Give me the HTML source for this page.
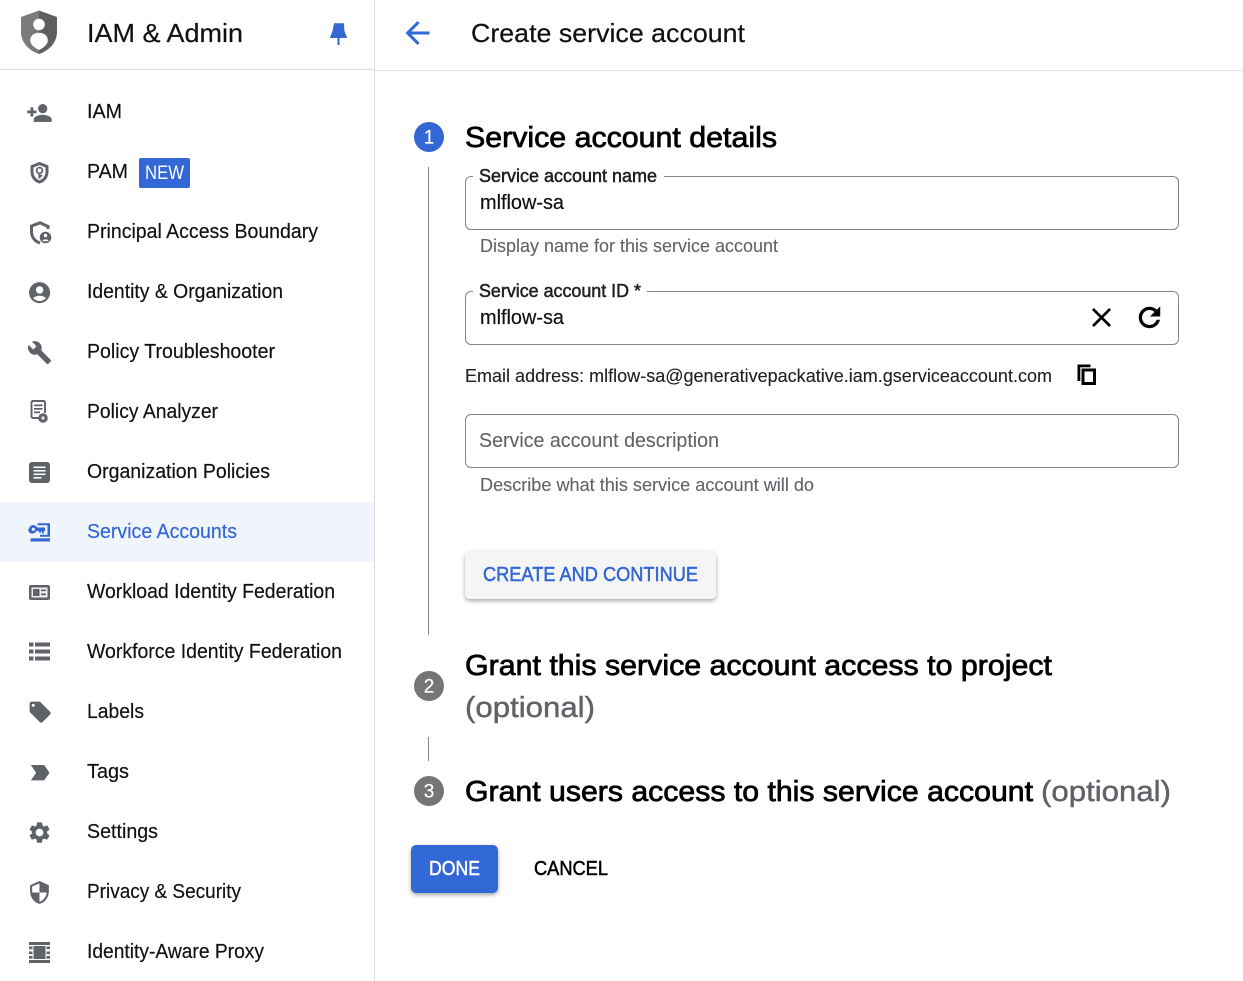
<!DOCTYPE html>
<html lang="en"><head><meta charset="utf-8"><title>Create service account</title>
<style>
html,body{margin:0;padding:0;background:#fff;width:1243px;height:981px;overflow:hidden}
svg{display:block}
text{font-family:"Liberation Sans",sans-serif}
.n{font-size:20px;fill:#111;stroke:#111;stroke-width:.18px}
.h{font-size:29px;fill:#000;stroke:#000;stroke-width:.75px}
.l{font-size:18px;fill:#202124;stroke:#202124;stroke-width:.5px}
.v{font-size:20px;fill:#111;stroke:#111;stroke-width:.18px}
.s{font-size:18px;fill:#5f6368;stroke:#5f6368;stroke-width:.1px}
.o{font-size:29px;fill:#5f6368;stroke:#5f6368;stroke-width:.45px}
.b{font-size:20px;stroke-width:.5px}
.i{fill:#5f6368}
</style></head><body>
<svg xmlns="http://www.w3.org/2000/svg" width="1243" height="981" viewBox="0 0 1243 981">
<defs>
<filter id="sh" x="-10%" y="-30%" width="120%" height="170%"><feDropShadow dx="0" dy="2" stdDeviation="2" flood-color="#000" flood-opacity=".35"/></filter>
</defs>
<rect width="1243" height="981" fill="#fff"/>
<rect x="0" y="502" width="374" height="60" fill="#eff4fd"/>
<rect x="374" y="0" width="1" height="981" fill="#dadce0"/>
<rect x="0" y="69" width="374" height="1" fill="#dadce0"/>
<rect x="375" y="70" width="868" height="1" fill="#e3e4e6"/>

<!-- logo -->
<path d="M39 10.500 21 17v15c0 10 7.500 18.500 18 22z" fill="#7b7b7b"/>
<path d="M39 10.500 57 17v15c0 10-7.500 18.500-18 22z" fill="#5f5f5f"/>
<circle cx="39" cy="24.500" r="5.800" fill="#fff"/>
<path d="M39 32.800c5.200 0 8.800 3.200 8.800 7.700 0 3.800-3.800 7-8.800 9.500-5-2.500-8.800-5.700-8.800-9.500 0-4.500 3.600-7.700 8.800-7.700z" fill="#fff"/>
<text x="87" y="42" font-size="26" fill="#111" stroke="#111" stroke-width=".2" textLength="156" lengthAdjust="spacingAndGlyphs">IAM &amp; Admin</text>
<path fill="#3367d6" d="M334 23.300h10l.3 6.500c.3 3 2.400 5.500 2.600 8.200h-7.400v7h-2v-7h-7.400c.2-2.700 2.300-5.200 2.600-8.200z"/>

<!-- nav text -->
<text class="n" x="87" y="118" textLength="35" lengthAdjust="spacingAndGlyphs">IAM</text>
<text class="n" x="87" y="178" textLength="41" lengthAdjust="spacingAndGlyphs">PAM</text>
<rect x="139" y="158" width="51" height="30" rx="2" fill="#3367d6"/>
<text x="145" y="179" font-size="19" fill="#fff" textLength="39" lengthAdjust="spacingAndGlyphs">NEW</text>
<text class="n" x="87" y="238" textLength="231" lengthAdjust="spacingAndGlyphs">Principal Access Boundary</text>
<text class="n" x="87" y="298" textLength="196" lengthAdjust="spacingAndGlyphs">Identity &amp; Organization</text>
<text class="n" x="87" y="358" textLength="188" lengthAdjust="spacingAndGlyphs">Policy Troubleshooter</text>
<text class="n" x="87" y="418" textLength="131" lengthAdjust="spacingAndGlyphs">Policy Analyzer</text>
<text class="n" x="87" y="478" textLength="183" lengthAdjust="spacingAndGlyphs">Organization Policies</text>
<text class="n" x="87" y="538" style="fill:#3367d6;stroke:#3367d6" textLength="150" lengthAdjust="spacingAndGlyphs">Service Accounts</text>
<text class="n" x="87" y="598" textLength="248" lengthAdjust="spacingAndGlyphs">Workload Identity Federation</text>
<text class="n" x="87" y="658" textLength="255" lengthAdjust="spacingAndGlyphs">Workforce Identity Federation</text>
<text class="n" x="87" y="718" textLength="57" lengthAdjust="spacingAndGlyphs">Labels</text>
<text class="n" x="87" y="778" textLength="42" lengthAdjust="spacingAndGlyphs">Tags</text>
<text class="n" x="87" y="838" textLength="71" lengthAdjust="spacingAndGlyphs">Settings</text>
<text class="n" x="87" y="898" textLength="154" lengthAdjust="spacingAndGlyphs">Privacy &amp; Security</text>
<text class="n" x="87" y="958" textLength="177" lengthAdjust="spacingAndGlyphs">Identity-Aware Proxy</text>

<!-- nav icons -->
<path class="i" stroke="#5f6368" stroke-width=".6" transform="translate(26.500,100) scale(1.080)" d="M15 12c2.210 0 4-1.790 4-4s-1.790-4-4-4-4 1.790-4 4 1.790 4 4 4zm-9-2V7H4v3H1v2h3v3h2v-3h3v-2H6zm9 4c-2.670 0-8 1.340-8 4v2h16v-2c0-2.660-5.330-4-8-4z"/>
<!-- PAM -->
<path fill="none" stroke="#5f6368" stroke-width="3" d="M39.500 163.500 32 166.500v5.500c0 4.600 3.100 8.600 7.500 10 4.400-1.400 7.500-5.400 7.500-10v-5.500z"/>
<circle cx="39.500" cy="170.500" r="2.900" fill="none" stroke="#5f6368" stroke-width="1.800"/>
<rect x="38.400" y="172.500" width="2.200" height="6" fill="#5f6368"/><rect x="39.500" y="175" width="2.800" height="1.700" fill="#5f6368"/>
<!-- PAB -->
<path fill="none" stroke="#5f6368" stroke-width="3" d="M48 229V226.500L40 222.800 31.500 226v6c0 5 3.500 9.500 8.500 11"/>
<circle cx="45.500" cy="237.500" r="5.800" fill="#5f6368"/>
<circle cx="45.500" cy="235.500" r="1.700" fill="#fff"/>
<path d="M42.300 240.500c.8-1.300 5.600-1.300 6.400 0-.8 1-5.600 1-6.400 0z" fill="#fff"/>
<!-- identity -->
<path class="i" transform="translate(27,280) scale(1.050)" d="M12 2C6.480 2 2 6.480 2 12s4.480 10 10 10 10-4.480 10-10S17.520 2 12 2zm0 4c1.930 0 3.500 1.570 3.500 3.500S13.930 13 12 13s-3.500-1.570-3.500-3.500S10.070 6 12 6zm0 14c-2.030 0-4.430-.82-6.140-2.880C7.550 15.800 9.680 15 12 15s4.450.8 6.140 2.120C16.430 19.180 14.030 20 12 20z"/>
<!-- wrench -->
<path class="i" transform="translate(27,340) scale(1.050)" d="M22.700 19l-9.100-9.100c.9-2.300.4-5-1.500-6.900-2-2-5-2.400-7.400-1.300L9 6 6 9 1.600 4.700C.4 7.100.9 10.100 2.900 12.100c1.900 1.900 4.600 2.400 6.900 1.500l9.100 9.100c.4.4 1 .4 1.400 0l2.300-2.300c.5-.4.500-1.100.1-1.400z"/>
<!-- analyzer -->
<path fill="none" stroke="#5f6368" stroke-width="1.900" d="M45 413v-10.500a1.500 1.500 0 0 0-1.500-1.500H33a1.500 1.500 0 0 0-1.500 1.500v14a1.500 1.500 0 0 0 1.500 1.500h6"/>
<rect x="34" y="404.500" width="8.500" height="1.700" fill="#5f6368"/><rect x="34" y="408" width="8.500" height="1.700" fill="#5f6368"/><rect x="34" y="411.500" width="6" height="1.700" fill="#5f6368"/>
<circle cx="43" cy="418" r="4.800" fill="#5f6368"/><circle cx="43" cy="418" r="1.600" fill="#e8e8e8"/>
<!-- org policies -->
<rect x="29" y="462" width="21" height="21" rx="3" fill="#5f6368"/>
<rect x="33.500" y="466.500" width="12" height="1.600" fill="#fff"/><rect x="33.500" y="470" width="12" height="1.600" fill="#fff"/><rect x="33.500" y="473.500" width="12" height="1.600" fill="#fff"/><rect x="33.500" y="477" width="8" height="1.600" fill="#fff"/>
<!-- service accounts -->
<g fill="#3367d6">
<path fill-rule="evenodd" d="M29 529.300a4.300 4.300 0 0 1 8.200-1.800H45v3.600h-1.200v2.400h-1.900v-2.400h-.9v1.700h-1.900v-1.700h-2.900a4.300 4.300 0 0 1-8.200-1.800zm4.300 1.600a1.600 1.600 0 1 0 0-3.200 1.600 1.600 0 0 0 0 3.200z"/>
<path d="M37.500 523.300H50v13.400H40v-2h7.500v-9.400h-10z"/>
<rect x="30.500" y="538.300" width="19.500" height="3.200"/>
</g>
<!-- workload -->
<path fill="#5f6368" fill-rule="evenodd" d="M31 585h17a2 2 0 0 1 2 2v11a2 2 0 0 1-2 2H31a2 2 0 0 1-2-2v-11a2 2 0 0 1 2-2zm.5 2.500v10h16v-10z"/>
<rect x="31.500" y="587.500" width="16" height="10" fill="#eeeeee"/>
<rect x="33" y="589" width="6.500" height="7" fill="#5f6368"/>
<rect x="41" y="589.500" width="5" height="1.700" fill="#5f6368"/>
<rect x="41" y="593.500" width="5" height="1.700" fill="#5f6368"/>
<!-- workforce -->
<g fill="#5f6368">
<rect x="29" y="642.500" width="4.500" height="4"/><rect x="35" y="642.500" width="15" height="4"/>
<rect x="29" y="649.500" width="4.500" height="4"/><rect x="35" y="649.500" width="15" height="4"/>
<rect x="29" y="656.500" width="4.500" height="4"/><rect x="35" y="656.500" width="15" height="4"/>
</g>
<!-- labels -->
<path class="i" transform="translate(27.500,699.500) scale(1.050)" d="M21.410 11.580l-9-9C12.050 2.220 11.550 2 11 2H4c-1.100 0-2 .9-2 2v7c0 .55.22 1.050.59 1.420l9 9c.36.36.86.58 1.410.58.55 0 1.050-.22 1.410-.59l7-7c.37-.36.59-.86.59-1.410 0-.55-.23-1.060-.59-1.420zM5.500 7C4.670 7 4 6.330 4 5.500S4.670 4 5.500 4 7 4.670 7 5.500 6.330 7 5.500 7z"/>
<!-- tags -->
<path class="i" transform="translate(27,759.500) scale(1.100,1.100)" d="M3.500 18.990l11 .01c.67 0 1.270-.33 1.630-.84L20.500 12l-4.370-6.160c-.36-.51-.96-.84-1.630-.84l-11 .01L8.340 12 3.500 18.990z"/>
<!-- settings -->
<path class="i" transform="translate(26.800,819.800) scale(1.060)" d="M19.140 12.940c.04-.3.06-.61.06-.94 0-.32-.02-.64-.07-.94l2.030-1.580c.18-.14.23-.41.12-.61l-1.920-3.320c-.12-.22-.37-.29-.59-.22l-2.390.96c-.5-.38-1.030-.7-1.620-.94l-.36-2.540c-.04-.24-.24-.41-.48-.41h-3.840c-.24 0-.43.17-.47.41l-.36 2.540c-.59.24-1.130.57-1.620.94l-2.390-.96c-.22-.08-.47 0-.59.22L2.740 8.870c-.12.21-.08.47.12.61l2.030 1.580c-.05.3-.09.63-.09.94s.02.64.07.94l-2.030 1.580c-.18.14-.23.41-.12.61l1.920 3.320c.12.22.37.29.59.22l2.390-.96c.5.38 1.030.7 1.620.94l.36 2.540c.05.24.24.41.48.41h3.840c.24 0 .44-.17.47-.41l.36-2.540c.59-.24 1.130-.56 1.620-.94l2.390.96c.22.08.47 0 .59-.22l1.920-3.320c.12-.22.07-.47-.12-.61l-2.010-1.580zM12 15.600c-1.980 0-3.600-1.620-3.600-3.600s1.620-3.600 3.600-3.600 3.600 1.620 3.600 3.600-1.620 3.600-3.600 3.600z"/>
<!-- privacy -->
<path class="i" transform="translate(27,880) scale(1.040)" d="M12 1L3 5v6c0 5.550 3.840 10.740 9 12 5.160-1.260 9-6.450 9-12V5l-9-4zm0 10.990h7c-.53 4.120-3.280 7.790-7 8.940V12H5V6.300l7-3.110v8.800z"/>
<!-- proxy -->
<g fill="#5f6368">
<rect x="29" y="942" width="21" height="3"/><rect x="29" y="960" width="21" height="3"/>
<rect x="33.500" y="946" width="12" height="13"/>
<rect x="29" y="946.500" width="3.500" height="2.700"/><rect x="29" y="951.500" width="3.500" height="2.700"/><rect x="29" y="956" width="3.500" height="2.700"/>
<rect x="46.500" y="946.500" width="3.500" height="2.700"/><rect x="46.500" y="951.500" width="3.500" height="2.700"/><rect x="46.500" y="956" width="3.500" height="2.700"/>
</g>

<!-- header main -->
<path transform="translate(399.500,15) scale(1.500)" fill="#3367d6" d="M20 11H7.830l5.590-5.590L12 4l-8 8 8 8 1.410-1.410L7.830 13H20v-2z"/>
<text x="471" y="42" font-size="26" fill="#111" stroke="#111" stroke-width=".2" textLength="274" lengthAdjust="spacingAndGlyphs">Create service account</text>

<!-- stepper -->
<circle cx="429" cy="137" r="15" fill="#3367d6"/>
<text x="429" y="143.500" font-size="19" fill="#fff" stroke="#fff" stroke-width=".2" text-anchor="middle">1</text>
<text class="h" x="465" y="147" textLength="312" lengthAdjust="spacingAndGlyphs">Service account details</text>
<rect x="428" y="167" width="1" height="468" fill="#80868b"/>

<!-- field 1 -->
<path d="M473 176.500h-2a5.500 5.500 0 0 0-5.500 5.500v42a5.500 5.500 0 0 0 5.500 5.500h702a5.500 5.500 0 0 0 5.500-5.500v-42a5.500 5.500 0 0 0-5.500-5.500H664" fill="none" stroke="#80868b"/>
<text class="l" x="479" y="182" textLength="178" lengthAdjust="spacingAndGlyphs">Service account name</text>
<text class="v" x="480" y="209" textLength="84" lengthAdjust="spacingAndGlyphs">mlflow-sa</text>
<text class="s" x="480" y="252" textLength="298" lengthAdjust="spacingAndGlyphs">Display name for this service account</text>

<!-- field 2 -->
<path d="M473 291.500h-2a5.500 5.500 0 0 0-5.500 5.500v42a5.500 5.500 0 0 0 5.500 5.500h702a5.500 5.500 0 0 0 5.500-5.500v-42a5.500 5.500 0 0 0-5.500-5.500H647" fill="none" stroke="#80868b"/>
<text class="l" x="479" y="297" textLength="162" lengthAdjust="spacingAndGlyphs">Service account ID *</text>
<text class="v" x="480" y="324" textLength="84" lengthAdjust="spacingAndGlyphs">mlflow-sa</text>
<path transform="translate(1085.200,301.200) scale(1.360)" fill="#000" d="M19 6.410L17.590 5 12 10.590 6.410 5 5 6.410 10.590 12 5 17.590 6.410 19 12 13.410 17.590 19 19 17.590 13.410 12z"/>
<path transform="translate(1133.900,301.900) scale(1.300)" fill="#000" stroke="#000" stroke-width=".5" d="M17.650 6.350C16.200 4.900 14.210 4 12 4c-4.420 0-7.990 3.580-7.990 8s3.570 8 7.990 8c3.730 0 6.840-2.550 7.730-6h-2.080c-.82 2.330-3.040 4-5.650 4-3.310 0-6-2.690-6-6s2.690-6 6-6c1.660 0 3.140.69 4.220 1.780L13 11h7V4l-2.350 2.350z"/>

<text x="465" y="382" font-size="18" fill="#202124" stroke="#202124" stroke-width=".12" textLength="587" lengthAdjust="spacingAndGlyphs">Email address: mlflow-sa@generativepackative.iam.gserviceaccount.com</text>
<path fill="#000" fill-rule="evenodd" d="M1077.500 364.500h13v2.800h-10.200v13.700h-2.800zM1081.500 368.500h14.500v16.500h-14.500zm3 3v10.500h8.500v-10.500z"/>

<!-- field 3 -->
<rect x="465.500" y="414.500" width="713" height="53" rx="5.500" fill="none" stroke="#80868b"/>
<text class="s" x="479" y="447" style="font-size:20px" textLength="240" lengthAdjust="spacingAndGlyphs">Service account description</text>
<text class="s" x="480" y="491" textLength="334" lengthAdjust="spacingAndGlyphs">Describe what this service account will do</text>

<!-- create button -->
<rect x="465" y="551" width="251" height="48" rx="5" fill="#f5f5f5" filter="url(#sh)"/>
<text class="b" x="483" y="581" fill="#3367d6" stroke="#3367d6" textLength="215" lengthAdjust="spacingAndGlyphs">CREATE AND CONTINUE</text>

<!-- step 2 -->
<circle cx="429" cy="686" r="15" fill="#757575"/>
<text x="429" y="692.500" font-size="19" fill="#fff" stroke="#fff" stroke-width=".2" text-anchor="middle">2</text>
<text class="h" x="465" y="675" textLength="587" lengthAdjust="spacingAndGlyphs">Grant this service account access to project</text>
<text class="o" x="465" y="717" textLength="130" lengthAdjust="spacingAndGlyphs">(optional)</text>
<rect x="428" y="737" width="1" height="24" fill="#80868b"/>

<!-- step 3 -->
<circle cx="429" cy="791" r="15" fill="#757575"/>
<text x="429" y="797.500" font-size="19" fill="#fff" stroke="#fff" stroke-width=".2" text-anchor="middle">3</text>
<text class="h" x="465" y="801" textLength="568" lengthAdjust="spacingAndGlyphs">Grant users access to this service account</text>
<text class="o" x="1041" y="801" textLength="130" lengthAdjust="spacingAndGlyphs">(optional)</text>

<!-- actions -->
<rect x="411" y="845" width="87" height="48" rx="5" fill="#3367d6" filter="url(#sh)"/>
<text class="b" x="429" y="875" fill="#fff" stroke="#fff" textLength="51" lengthAdjust="spacingAndGlyphs">DONE</text>
<text class="b" x="534" y="875" fill="#000" stroke="#000" textLength="74" lengthAdjust="spacingAndGlyphs">CANCEL</text>
</svg>
</body></html>
